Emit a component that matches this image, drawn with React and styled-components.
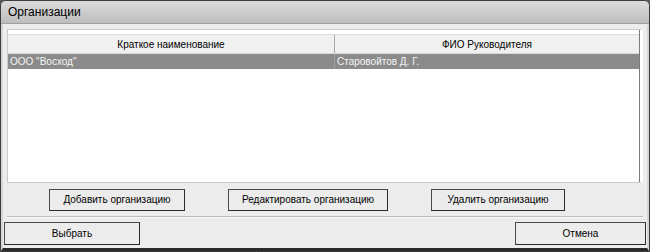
import React from "react";
import styled, { createGlobalStyle } from "styled-components";

const GlobalStyle = createGlobalStyle`
  html, body {
    margin: 0;
    padding: 0;
    background: #5a5a5a;
  }
  body {
    font-family: "Liberation Sans", Arial, sans-serif;
    font-size: 10px;
    color: #000;
  }
`;

const Window = styled.div`
  width: 650px;
  height: 252px;
  box-sizing: border-box;
  border: 1px solid #3c3c3c;
  border-radius: 6px 6px 0 0;
  background: #ececec;
  display: flex;
  flex-direction: column;
  overflow: hidden;
`;

const TitleBar = styled.div`
  height: 22px;
  flex: none;
  display: flex;
  align-items: center;
  padding-left: 7px;
  font-size: 12px;
  background: linear-gradient(#dcdcdc, #bdbdbd);
  border-bottom: 1px solid #a0a0a0;
`;

const Body = styled.div`
  flex: 1;
  display: flex;
  flex-direction: column;
  padding: 5px 4px 3px 4px;
  border-left: 2px solid #d6d6d6;
  border-right: 2px solid #d6d6d6;
  border-bottom: 3px solid #2a2a2a;
`;

const Grid = styled.div`
  height: 152px;
  background: #fff;
  border: 1px solid #c8c8c8;
  border-right: 3px solid #fff;
  display: flex;
  flex-direction: column;
`;

const Inner = styled.div`
  flex: 1;
  border-right: 1px solid #7a7a7a;
  padding-top: 4px;
  display: flex;
  flex-direction: column;
`;

const HeaderRow = styled.div`
  display: grid;
  grid-template-columns: 327px 1fr;
  height: 18px;
  background: #f0f0f0;
  border-top: 1px solid #dedede;
  border-bottom: 1px solid #d8d8d8;
`;

const HeaderCell = styled.div`
  display: flex;
  align-items: center;
  justify-content: center;
  border-right: 1px solid #a8a8a8;
  &:last-child {
    border-right: none;
  }
`;

const DataRow = styled.div`
  display: grid;
  grid-template-columns: 327px 1fr;
  height: 15px;
  background: ${(p) => (p.$selected ? "#8b8b8b" : "#fff")};
  color: ${(p) => (p.$selected ? "#f4f4f4" : "#000")};
`;

const Cell = styled.div`
  display: flex;
  align-items: center;
  padding-left: 2px;
  border-right: 1px solid #a0a0a0;
  &:last-child {
    border-right: none;
  }
`;

const ActionRow = styled.div`
  display: flex;
  height: 33px;
  align-items: center;
  padding-left: 42px;
  gap: 43px;
  border-bottom: 1px solid #bcbcbc;
  box-shadow: 0 1px 0 #fafafa;
`;

const Button = styled.button`
  box-sizing: border-box;
  width: ${(p) => p.$w}px;
  height: ${(p) => p.$h || 22}px;
  background: #ececec;
  border: 1px solid #4a4a4a;
  border-right-color: #2a2a2a;
  border-bottom-color: #2a2a2a;
  font-family: inherit;
  font-size: 10px;
  color: #000;
  padding: 0;
`;

const FooterRow = styled.div`
  flex: 1;
  display: flex;
  justify-content: space-between;
  align-items: center;
  padding-top: 4px;
  margin: 0 -3px 0 -3px;
`;

const rows = [{ name: 'ООО "Восход"', head: "Старовойтов Д. Г.", selected: true }];

export default function App() {
  return (
    <>
      <GlobalStyle />
      <Window>
        <TitleBar>Организации</TitleBar>
        <Body>
          <Grid>
            <Inner>
              <HeaderRow>
                <HeaderCell>Краткое наименование</HeaderCell>
                <HeaderCell>ФИО Руководителя</HeaderCell>
              </HeaderRow>
              {rows.map((r) => (
                <DataRow key={r.name} $selected={r.selected}>
                  <Cell>{r.name}</Cell>
                  <Cell>{r.head}</Cell>
                </DataRow>
              ))}
            </Inner>
          </Grid>
          <ActionRow>
            <Button $w={136}>Добавить организацию</Button>
            <Button $w={160}>Редактировать организацию</Button>
            <Button $w={134}>Удалить организацию</Button>
          </ActionRow>
          <FooterRow>
            <Button $w={136} $h={23}>Выбрать</Button>
            <Button $w={131} $h={23}>Отмена</Button>
          </FooterRow>
        </Body>
      </Window>
    </>
  );
}
